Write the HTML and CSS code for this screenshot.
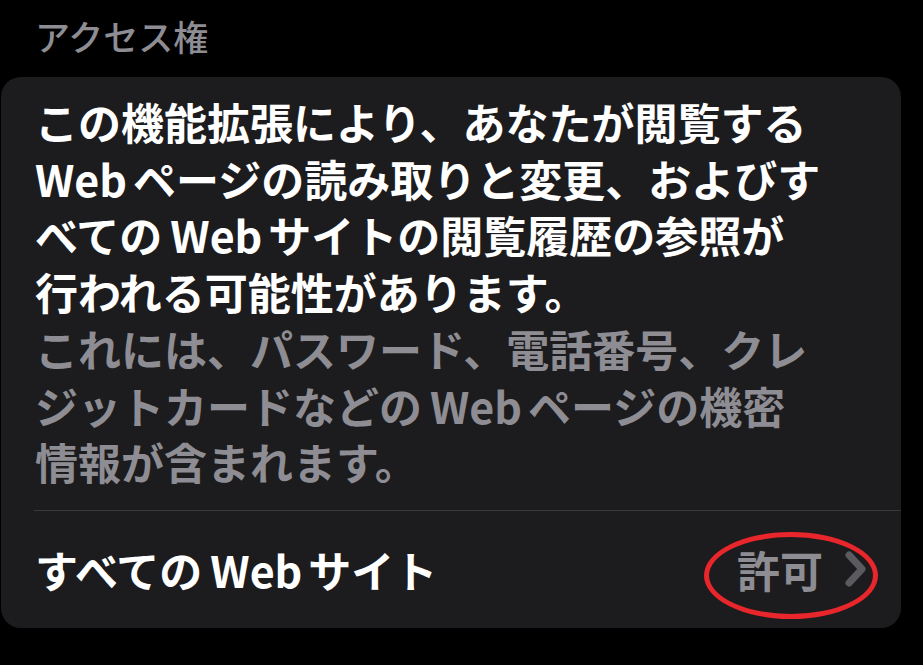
FILE: index.html
```html
<!DOCTYPE html>
<html lang="ja">
<head>
    <meta charset="UTF-8">
    <title>アクセス権</title>
    <link rel="stylesheet" href="styles.css">
</head>
<body>
    <h2 class="section-title">アクセス権</h2>
    <div class="card">
        <div class="card-body">
            <p class="notice">この機能拡張により、あなたが閲覧する<br><span class="latin first">Web</span>ページの読み取りと変更、およびす<br>べての<span class="latin">Web</span>サイトの閲覧履歴の参照が<br>行われる可能性があります。</p>
            <p class="detail">これには、パスワード、電話番号、クレ<br>ジットカードなどの<span class="latin">Web</span>ページの機密<br>情報が含まれます。</p>
        </div>
        <div class="row">
            <span class="row-label">すべての<span class="latin">Web</span>サイト</span>
            <span class="row-value">
                許可
                <svg class="chevron" width="22" height="36" viewBox="0 0 22 36">
                    <polyline points="4,4 17,18 4,32" fill="none" stroke="#5a5a5f" stroke-width="7" stroke-linecap="round" stroke-linejoin="round"/>
                </svg>
            </span>
            <span class="mark"></span>
        </div>
    </div>
</body>
</html>
```

FILE: styles.css
```css
body {
    margin: 0;
    background: #000;
    font-family: "Noto Sans CJK JP", "Noto Sans", sans-serif;
    color: #fff;
}
.section-title {
    margin: 0;
    padding: 13px 0 0 35px;
    height: 77px;
    box-sizing: border-box;
    font-size: 35px;
    font-weight: 500;
    line-height: 46px;
    color: #8d8d93;
}
.card {
    margin-left: 1px;
    width: 900px;
    background: #1c1c1e;
    border-radius: 20px;
}
.card-body {
    margin-left: 33px;
    padding: 16px 0 20px 1px;
    border-bottom: 1px solid #3a3a3c;
}
.card-body p {
    margin: 0;
    font-size: 43px;
    line-height: 56.7px;
    white-space: nowrap;
}
.notice {
    font-weight: 600;
}
.detail {
    font-weight: 600;
    color: #8d8d93;
}
.latin {
    margin: 0 6px 0 8px;
}
.latin.first {
    margin-left: 0;
}
.row {
    position: relative;
    display: flex;
    align-items: center;
    justify-content: space-between;
    height: 117px;
    padding: 0 34px 0 34px;
}
.row-label {
    font-size: 43px;
    font-weight: 600;
}
.row-value {
    display: flex;
    align-items: center;
    gap: 22px;
    font-size: 43px;
    font-weight: 600;
    color: #8d8d93;
}
.chevron {
    display: block;
}
.mark {
    position: absolute;
    right: 23px;
    top: 21px;
    width: 174px;
    height: 87px;
    box-sizing: border-box;
    border: 5px solid #e8262b;
    border-radius: 50%;
}
```
